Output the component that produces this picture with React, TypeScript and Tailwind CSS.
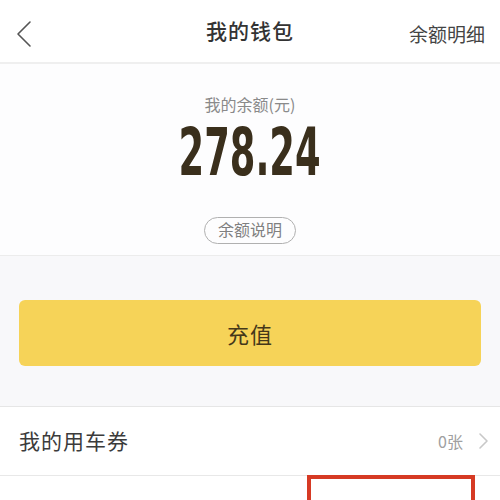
const cjk = "font-['Noto_Sans_CJK_SC','Noto_Sans',sans-serif]";

export default function App() {
    return (
        <div className={`w-[500px] h-[500px] overflow-hidden bg-white ${cjk}`}>
            {/* Header */}
            <div className="relative h-[64px] flex items-center justify-center bg-white border-b-2 border-[#efefef]">
                <svg className="absolute left-[12px] top-[18px] w-[24px] h-[32px]" viewBox="0 0 24 32" fill="none">
                    <polyline points="18,4 6,16 18,28" stroke="#555" strokeWidth="1.6" strokeLinecap="round" strokeLinejoin="round" />
                </svg>
                <span className="text-[21px] font-medium text-[#333] tracking-[1px]">我的钱包</span>
                <span className="absolute right-[15px] top-[20px] text-[19px] text-[#444]">余额明细</span>
            </div>

            {/* Balance */}
            <div className="h-[192px] bg-[#fdfdfe] flex flex-col items-center border-b border-[#ececec]">
                <span className="mt-[29px] text-[16px] leading-[22px] text-[#8a8a8a]">我的余额(元)</span>
                <span className="mt-[12px] h-[52px] leading-[52px] text-[66px] font-bold text-[#3a2f1c] font-['DejaVu_Sans_Condensed','Liberation_Sans_Narrow',sans-serif] scale-x-[0.62]">
                    278.24
                </span>
                <span className="mt-[38px] h-[27px] px-[13px] rounded-full border-[1.5px] border-[#b0b0b0] text-[16px] leading-[23px] text-[#808080]">
                    余额说明
                </span>
            </div>

            {/* Recharge */}
            <div className="h-[151px] bg-[#f8f8fa] px-[19px] pt-[44px] border-b border-[#e6e6e6]">
                <button className="w-full h-[66px] rounded-[6px] bg-[#f6d358] text-[22px] text-[#45381a] tracking-[1px]">
                    充值
                </button>
            </div>

            {/* Coupons */}
            <div className="h-[69px] flex items-center pl-[19px] pr-[11px] bg-white border-b border-[#e8e8e8]">
                <span className="text-[21px] text-[#3b3b3b] tracking-[1px]">我的用车券</span>
                <span className="ml-auto text-[16px] text-[#a0a0a0]">0张</span>
                <svg className="ml-[14px] w-[12px] h-[18px]" viewBox="0 0 12 18" fill="none">
                    <polyline points="3,2 10,9 3,16" stroke="#c8c8c8" strokeWidth="1.6" strokeLinecap="round" strokeLinejoin="round" />
                </svg>
            </div>

            {/* Next row, cut off */}
            <div className="relative h-[69px] flex items-start px-[19px] pt-[19px] bg-white">
                <span className="text-[21px] text-[#d0d0d0] tracking-[1px]">我的发票</span>
                <div className="absolute left-[307px] top-[-1px] w-[168px] h-[40px] border-4 border-[#d63a24]" />
            </div>
        </div>
    );
}
